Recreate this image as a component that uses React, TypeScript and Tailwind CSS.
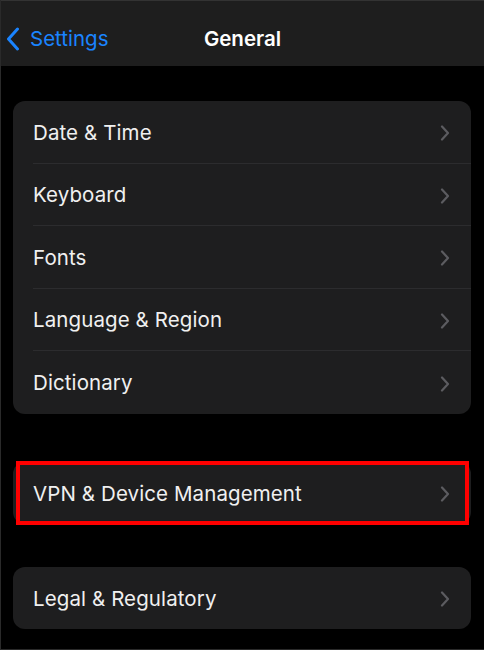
import React from 'react';

const font = { fontFamily: 'Inter, "Noto Sans", sans-serif' };

const Chevron = () => (
  <svg width="10" height="16" viewBox="0 0 10 16" className="shrink-0">
    <path d="M2 1.5 L8 8 L2 14.5" fill="none" stroke="#5c5c60" strokeWidth="2.2" strokeLinecap="round" strokeLinejoin="round" />
  </svg>
);

const Row = ({ label, last }: { label: string; last?: boolean }) => (
  <div className="flex h-[62.5px] items-center pl-5">
    <div className={`flex h-full flex-1 items-center justify-between pr-[21px] pt-[3px] ${last ? '' : 'border-b border-[#2c2c2e]'}`}>
      <span className="text-[20.5px] tracking-[0.1px] text-[#f0f0f0]">{label}</span>
      <Chevron />
    </div>
  </div>
);

export default function App() {
  const general = ['Date & Time', 'Keyboard', 'Fonts', 'Language & Region', 'Dictionary'];

  return (
    <div className="h-[650px] w-[484px] overflow-hidden border-l border-b border-[#2a2a2a] bg-black" style={font}>
      {/* Nav bar */}
      <div className="relative flex h-[66px] items-center border-t border-[#333] bg-[#1e1e1e] pt-[11px]">
        <div className="flex items-center pl-[5px] text-[#1a84ff]">
          <svg width="14" height="24" viewBox="0 0 14 24">
            <path d="M11.5 2 L2.5 12 L11.5 22" fill="none" stroke="#1a84ff" strokeWidth="3" strokeLinecap="round" strokeLinejoin="round" />
          </svg>
          <span className="ml-[10px] text-[20.5px]">Settings</span>
        </div>
        <span className="absolute left-1/2 -translate-x-1/2 text-[20.5px] font-semibold text-white">General</span>
      </div>

      <div className="pl-[12px] pr-[13px] pt-[35px]">
        <div className="rounded-[12px] bg-[#1e1e1f]">
          {general.map((g, i) => (
            <Row key={g} label={g} last={i === general.length - 1} />
          ))}
        </div>

        <div className="relative mt-[48px] h-[62px] rounded-[12px] bg-[#1e1e1f]">
          <Row label="VPN & Device Management" last />
          <div className="pointer-events-none absolute -top-[1px] -bottom-[1px] left-[3px] right-[2px] border-4 border-[#f00]" />
        </div>

        <div className="mt-[43px] h-[62px] rounded-[12px] bg-[#1e1e1f]">
          <Row label="Legal & Regulatory" last />
        </div>
      </div>
    </div>
  );
}
